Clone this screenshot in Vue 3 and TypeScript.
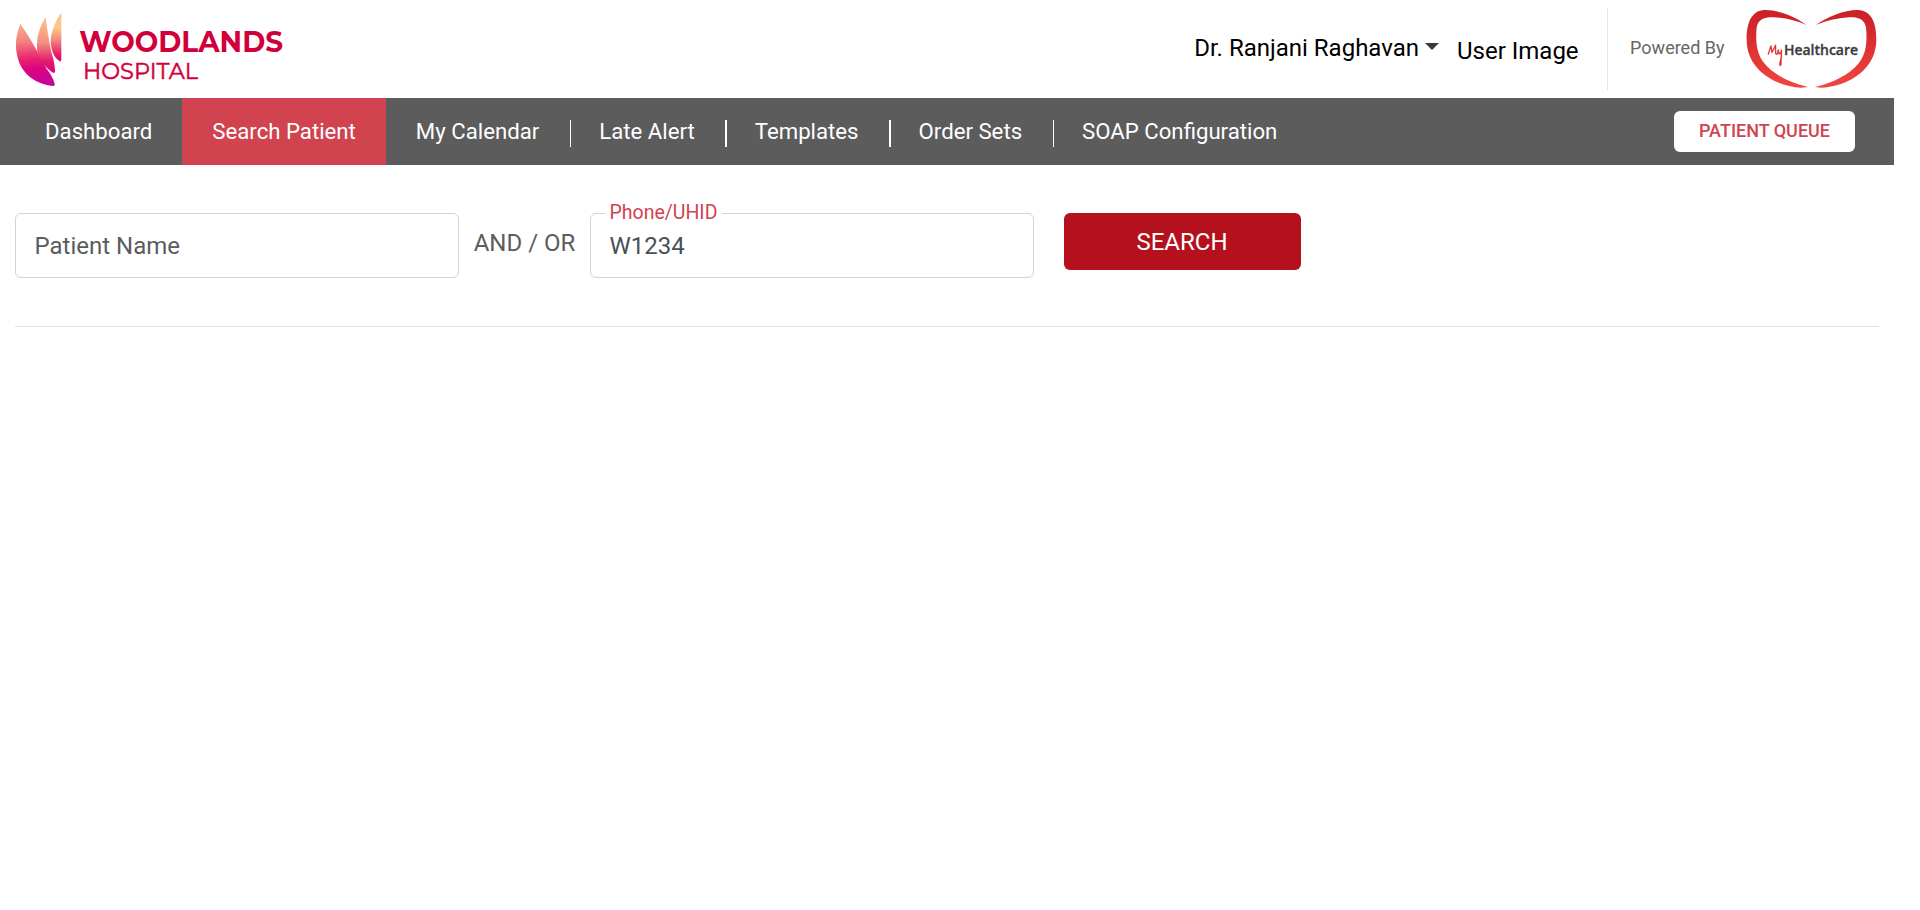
<script setup lang="ts">
import { ref } from 'vue'

interface NavItem {
  label: string
  active?: boolean
  divided?: boolean
}

const navItems: NavItem[] = [
  { label: 'Dashboard' },
  { label: 'Search Patient', active: true },
  { label: 'My Calendar', divided: true },
  { label: 'Late Alert', divided: true },
  { label: 'Templates', divided: true },
  { label: 'Order Sets', divided: true },
  { label: 'SOAP Configuration' },
]

const patientName = ref('')
const phone = ref('W1234')
</script>

<template>
  <div class="page">
    <header class="header">
      <svg class="hospital-logo" viewBox="0 0 900 294" role="img" aria-label="Woodlands Hospital">
        <defs>
          <linearGradient id="leaf-a" x1="40" y1="72" x2="60" y2="256" gradientUnits="userSpaceOnUse">
            <stop offset="0" stop-color="#fbb28a" />
            <stop offset="0.3" stop-color="#f4827d" />
            <stop offset="0.6" stop-color="#e9206f" />
            <stop offset="0.75" stop-color="#de0480" />
            <stop offset="1" stop-color="#c60499" />
          </linearGradient>
          <linearGradient id="leaf-b" x1="0" y1="52" x2="0" y2="218" gradientUnits="userSpaceOnUse">
            <stop offset="0" stop-color="#fcc489" />
            <stop offset="0.45" stop-color="#f4917f" />
            <stop offset="0.8" stop-color="#e5176f" />
            <stop offset="1" stop-color="#d80487" />
          </linearGradient>
          <linearGradient id="leaf-c" x1="0" y1="39" x2="0" y2="184" gradientUnits="userSpaceOnUse">
            <stop offset="0" stop-color="#f9bd87" />
            <stop offset="0.3" stop-color="#fdc98a" />
            <stop offset="0.55" stop-color="#f48a7e" />
            <stop offset="0.85" stop-color="#e61d6d" />
            <stop offset="1" stop-color="#df0579" />
          </linearGradient>
        </defs>
        <path d="M61 71C49 101 45 132 50 158C58 215 100 251 159 258Q167 256 163 248C159 234 151 220 140 207C131 190 123 174 113 157C97 126 79 98 61 71Z" fill="url(#leaf-a)" />
        <path d="M137 51C119 80 109 111 111 149C117 179 136 203 160 219Q167 219 165 210C164 194 161 178 156 163C149 133 142 96 137 51Z" fill="url(#leaf-b)" />
        <path d="M184 38C165 66 152 94 152 127C154 153 162 173 179 184Q184 185 184 178Z" fill="url(#leaf-c)" />
        <text class="brand-main" x="238" y="156" textLength="611" lengthAdjust="spacingAndGlyphs">WOODLANDS</text>
        <text class="brand-sub" x="249" y="236" textLength="345" lengthAdjust="spacingAndGlyphs">HOSPITAL</text>
      </svg>

      <div class="account">
        <button class="user-menu" type="button">Dr. Ranjani Raghavan<span class="caret" /></button>
        <span class="user-image">User Image</span>
        <div class="powered">
          <span class="powered-text">Powered By</span>
          <svg class="health-logo" viewBox="465 25 400 245" role="img" aria-label="MyHealthcare">
            <defs>
              <linearGradient id="heart" x1="0" y1="30" x2="0" y2="265" gradientUnits="userSpaceOnUse">
                <stop offset="0" stop-color="#cb1f27" />
                <stop offset="1" stop-color="#f04541" />
              </linearGradient>
            </defs>
            <path d="M650 75C618 50 562 29 524 30C485 31 469 69 470 122C471 205 547 258 634 264L655 262C597 248 550 223 523 190C500 162 496 125 500 83C504 58 522 51 552 52C588 54 620 63 650 75Z" fill="url(#heart)" />
            <path d="M679 75C711 50 767 29 805 30C845 31 861 69 860 122C859 205 783 258 696 264L675 262C733 248 780 223 807 190C830 162 833 125 829 83C825 58 807 51 777 52C741 54 709 63 679 75Z" fill="url(#heart)" />
            <g class="my" fill="none">
              <path d="M535 163L543 138L546 158L557 136L557 161Q560 166 563 160L565 150L567 162Q573 163 575 151L573 195Q569 200 570 189L575 169" />
            </g>
            <text class="health-text" x="582" y="165" textLength="223" lengthAdjust="spacingAndGlyphs">Healthcare</text>
          </svg>
        </div>
      </div>
    </header>

    <nav class="nav">
      <a
        v-for="item in navItems"
        :key="item.label"
        class="nav-item"
        :class="{ active: item.active, divided: item.divided }"
      >{{ item.label }}</a>
      <button class="queue" type="button">PATIENT QUEUE</button>
    </nav>

    <main class="content">
      <form class="search" @submit.prevent>
        <div class="field">
          <input v-model="patientName" class="input" type="text" placeholder="Patient Name" />
        </div>
        <span class="joiner">AND / OR</span>
        <div class="field">
          <input v-model="phone" class="input" type="text" />
          <label class="float-label">Phone/UHID</label>
        </div>
        <button class="submit" type="submit">SEARCH</button>
      </form>
    </main>
  </div>
</template>

<style>
body {
  background: #fff;
}
</style>

<style scoped>
.page {
  width: 1894px;
  font-family: Roboto, "Liberation Sans", sans-serif;
  font-size: 24px;
}

.page * {
  box-sizing: border-box;
}

button {
  border: 0;
  padding: 0;
  background: none;
  font-family: inherit;
}

.header {
  display: flex;
  justify-content: space-between;
  height: 98px;
}

.hospital-logo {
  width: 300px;
  height: 98px;
}

.brand-main {
  font: 700 88px Montserrat, Lato, sans-serif;
  fill: #d1003b;
}

.brand-sub {
  font: 400 66px Montserrat, Lato, sans-serif;
  fill: #d1003b;
  stroke: #d1003b;
  stroke-width: 1.5;
}

.account {
  display: flex;
  align-items: flex-start;
  padding-right: 16px;
}

.user-menu {
  display: flex;
  align-items: center;
  margin-top: 30px;
  font-size: 24px;
  line-height: 36px;
  color: #000;
}

.caret {
  margin: -3px 0 0 6px;
  border: 7px solid transparent;
  border-top-color: #343a40;
  border-bottom: 0;
}

.user-image {
  margin: 33px 28px 0 18px;
  line-height: 36px;
  color: #000;
}

.powered {
  display: flex;
  align-items: center;
  height: 82px;
  margin-top: 8px;
  border-left: 1px solid #e6e6e6;
}

.powered-text {
  margin: -4px 20.5px 0 22.5px;
  font-size: 18px;
  color: #666;
}

.health-logo {
  width: 133px;
  height: 82px;
}

.health-text {
  font: 600 45px "Open Sans", sans-serif;
  fill: #3b3b3d;
  stroke: #3b3b3d;
  stroke-width: 1;
}

.my {
  stroke: #e3343a;
  stroke-width: 4;
  stroke-linejoin: round;
  stroke-linecap: round;
}

.nav {
  display: flex;
  align-items: center;
  height: 67px;
  padding: 0 39px 0 15px;
  background: #5c5c5c;
}

.nav-item {
  position: relative;
  padding: 0 30px;
  font-size: 22.2px;
  line-height: 67px;
  color: #fff;
}

.nav-item.active {
  background: #d1434f;
}

.nav-item.divided::after {
  content: "";
  position: absolute;
  top: 22px;
  right: -2.2px;
  width: 1.5px;
  height: 27px;
  background: #fff;
}

.queue {
  width: 181px;
  height: 41px;
  margin-left: auto;
  padding-bottom: 2px;
  border-radius: 6px;
  background: #fff;
  font-size: 18px;
  font-weight: 500;
  color: #d1434f;
}

.content {
  padding: 48px 15px 0;
}

.search {
  display: flex;
  align-items: flex-start;
  height: 114px;
  border-bottom: 1px solid #e3e3e3;
}

.field {
  position: relative;
  width: 444px;
}

.input {
  display: block;
  width: 100%;
  height: 65px;
  padding: 0 18.5px;
  border: 1px solid #ced4da;
  border-radius: 6px;
  outline: 0;
  background: #fff;
  font: 24px Roboto, "Liberation Sans", sans-serif;
  color: #495057;
}

.input::placeholder {
  color: #5c5c5c;
  opacity: 1;
}

.float-label {
  position: absolute;
  top: -11px;
  left: 15px;
  padding: 0 5px 0 4.5px;
  background: #fff;
  font-size: 19.5px;
  line-height: 22px;
  color: #d1434f;
}

.joiner {
  width: 131px;
  line-height: 60px;
  text-align: center;
  color: #5c5c5c;
}

.submit {
  width: 237px;
  height: 57px;
  margin-left: 30px;
  padding-right: 1px;
  border-radius: 6px;
  background: #b5101e;
  font-size: 24px;
  color: #fff;
}
</style>
